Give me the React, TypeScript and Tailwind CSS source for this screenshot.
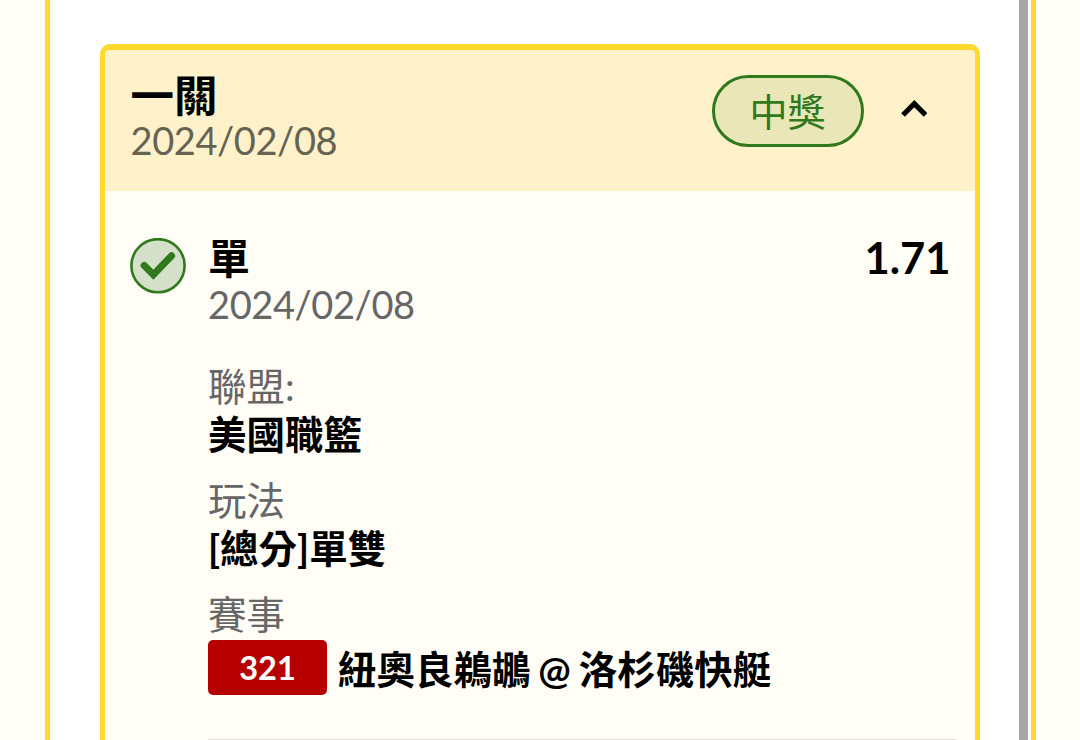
const details = [
  { label: "聯盟:", value: "美國職籃" },
  { label: "玩法", value: "[總分]單雙" },
];

const StatusCheck = () => (
  <svg viewBox="0 0 56 56" className="h-14 w-14 shrink-0">
    <circle cx="28" cy="27.7" r="26.6" fill="#d5e0ca" stroke="#30791d" strokeWidth="2.6" />
    <path d="M14.2 27.5l9.2 9.2L41.5 17.8" fill="none" stroke="#30791d" strokeWidth="7" strokeLinecap="round" />
  </svg>
);

const CardHeader = () => (
  <div className="flex h-[141px] justify-between bg-[#fff2ca] pl-[26px] pr-[48px] pt-[25px]">
    <div>
      <h2 className="-mt-px h-[43px] text-[43.5px] font-bold leading-[43px]">一關</h2>
      <p className="text-[38px] leading-[46px] tracking-[-0.4px] text-[#666352]">2024/02/08</p>
    </div>
    <div className="flex h-[72px] items-center gap-[37px]">
      <span className="flex h-[72px] w-[152px] items-center justify-center rounded-full border-3 border-[#30791d] bg-[#e9e6b7] text-[38px] text-[#30791d]">
        中獎
      </span>
      <svg viewBox="0 0 26 18" className="-mt-1 h-[18px] w-[26px]">
        <path d="M2 15L13.3 3.7l11.3 11.3" fill="none" stroke="#000" strokeWidth="5.2" />
      </svg>
    </div>
  </div>
);

const App = () => {
  return (
    <div className="flex h-[740px] w-[1080px] overflow-hidden bg-[#fffdf5] pl-[44.5px] font-[Lato,'Noto_Sans_CJK_TC',sans-serif] text-black">
      <div className="flex w-[991px] shrink-0 border-x-5 border-[#ffd92e] bg-white">
        <div className="flex-1 pl-[50px] pt-11">
          <section className="h-[760px] w-[880px] overflow-hidden rounded-[10px] border-5 border-t-6 border-[#ffd92e] bg-[#fffdf5]">
            <CardHeader />
            <div className="flex gap-[22.5px] pl-[25px] pr-[19px] pt-[47px]">
              <StatusCheck />
              <div className="flex-1">
                <div className="flex justify-between">
                  <div>
                    <h3 className="-mt-px h-[42px] text-[42px] font-bold leading-[42px]">單</h3>
                    <p className="text-[38px] leading-[50px] tracking-[-0.4px] text-[#666]">2024/02/08</p>
                  </div>
                  <span className="pr-[5px] text-[43.5px] font-bold leading-[39px]">1.71</span>
                </div>
                <dl className="mt-[34px] text-[38.5px]">
                  {details.map((item) => (
                    <div key={item.label} className="h-[114px]">
                      <dt className="leading-[46px] text-[#666]">{item.label}</dt>
                      <dd className="font-bold leading-[50px]">{item.value}</dd>
                    </div>
                  ))}
                  <dt className="leading-[46px] text-[#666]">賽事</dt>
                  <dd className="mt-[2.5px] flex items-center gap-[11px] font-bold">
                    <span className="flex h-[55px] w-[119px] items-center justify-center rounded-[5px] bg-[#b60000] pt-[3px] text-[32.5px] text-white">
                      321
                    </span>
                    <span className="whitespace-nowrap pt-1 leading-[51px] [word-spacing:-1.5px]">紐奧良鵜鶘 @ 洛杉磯快艇</span>
                  </dd>
                </dl>
                <hr className="mt-[44px] border-t-2 border-[#deddd5]" />
              </div>
            </div>
          </section>
        </div>
        <div className="w-[9px] shrink-0 bg-[#a6a6a6]" />
        <div className="w-[3px] shrink-0" />
      </div>
    </div>
  );
};

export default App;
